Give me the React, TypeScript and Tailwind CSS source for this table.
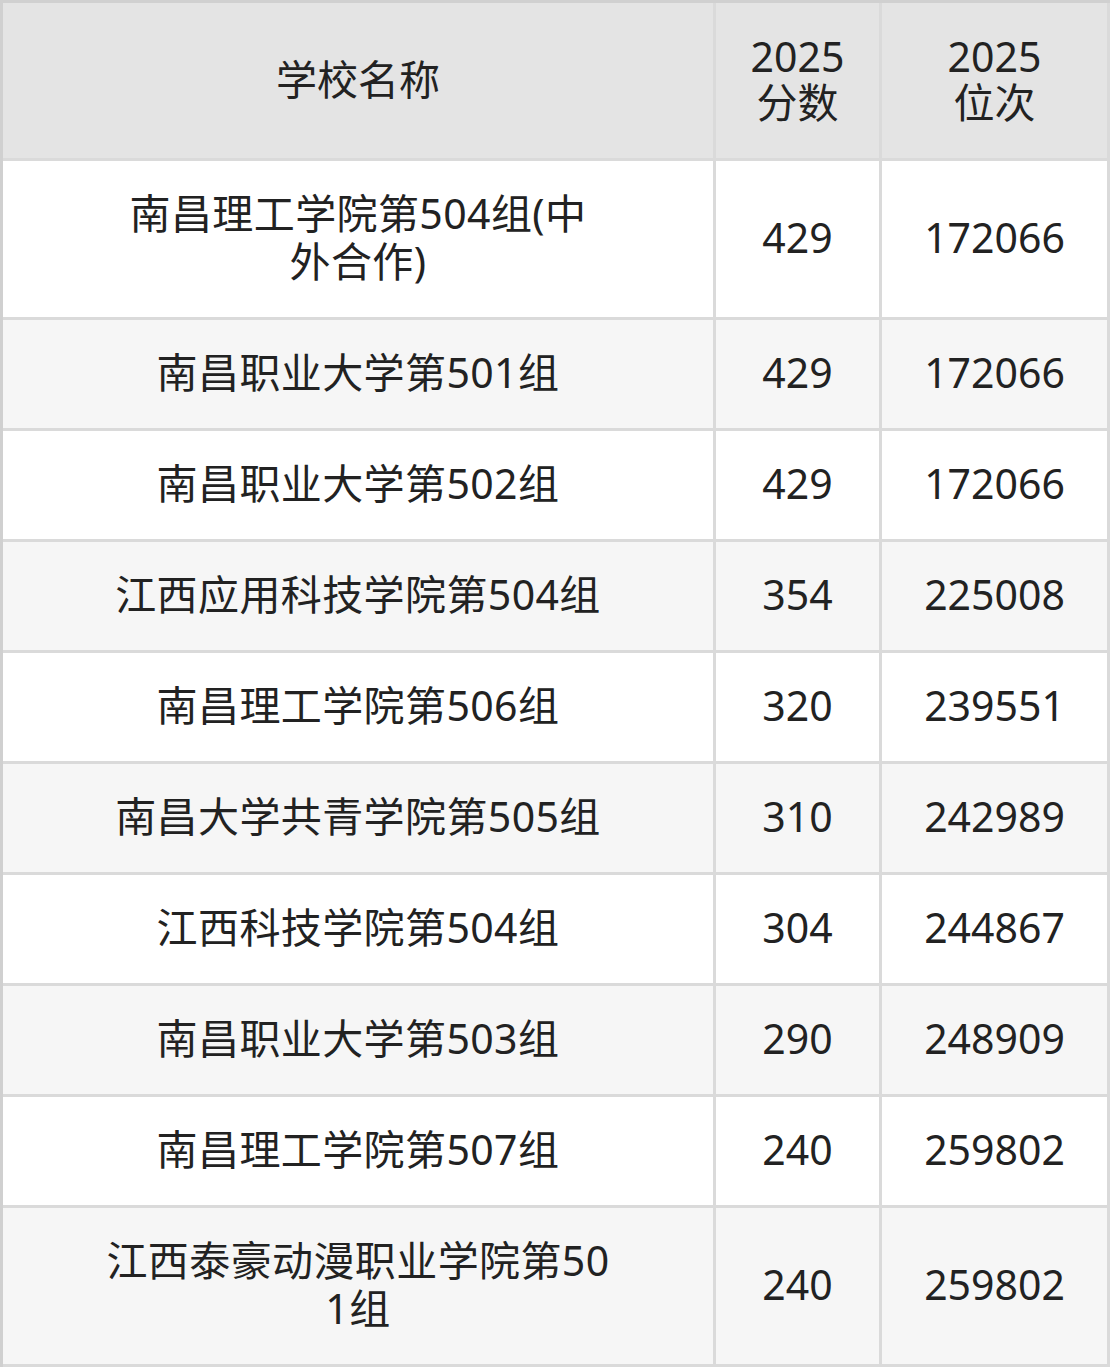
const rows = [
  { name: ["南昌理工学院第504组(中", "外合作)"], score: "429", rank: "172066", tall: true },
  { name: ["南昌职业大学第501组"], score: "429", rank: "172066" },
  { name: ["南昌职业大学第502组"], score: "429", rank: "172066" },
  { name: ["江西应用科技学院第504组"], score: "354", rank: "225008" },
  { name: ["南昌理工学院第506组"], score: "320", rank: "239551" },
  { name: ["南昌大学共青学院第505组"], score: "310", rank: "242989" },
  { name: ["江西科技学院第504组"], score: "304", rank: "244867" },
  { name: ["南昌职业大学第503组"], score: "290", rank: "248909" },
  { name: ["南昌理工学院第507组"], score: "240", rank: "259802" },
  { name: ["江西泰豪动漫职业学院第50", "1组"], score: "240", rank: "259802", tall: true },
];

const cell =
  "flex items-center justify-center text-center border-r-[3px] border-b-[3px] border-[#dadada]";

export default function App() {
  return (
    <div
      className="w-[1110px] bg-white text-[#222] text-[41px] leading-[48px]"
      style={{ fontFamily: '"Noto Sans", "Noto Sans CJK SC", sans-serif' }}
    >
      <div className="grid grid-cols-[713px_166px_228px] border-l-[3px] border-t-[3px] border-[#d0d0d0]">
        {/* header */}
        <div className={`${cell} h-[158px] bg-[#e4e4e4] border-[#d0d0d0] pb-1`}>学校名称</div>
        <div className={`${cell} h-[158px] bg-[#e4e4e4] border-[#d0d0d0] leading-[46px] pb-1`}>
          2025
          <br />
          分数
        </div>
        <div className={`${cell} h-[158px] bg-[#e4e4e4] border-[#d0d0d0] leading-[46px] pb-1`}>
          2025
          <br />
          位次
        </div>

        {rows.map((r, i) => {
          const bg = i % 2 === 1 ? "bg-[#f6f6f6]" : "bg-white";
          const h = r.tall ? "h-[159px]" : "h-[111px]";
          return (
            <div key={i} className="contents">
              <div className={`${cell} ${bg} ${h}`}>
                <div className="tracking-[0.4px] pb-1">
                  {r.name.map((line, j) => (
                    <div key={j}>{line}</div>
                  ))}
                </div>
              </div>
              <div className={`${cell} ${bg} ${h} pb-1`}>{r.score}</div>
              <div className={`${cell} ${bg} ${h} pb-1`}>{r.rank}</div>
            </div>
          );
        })}
      </div>
    </div>
  );
}
